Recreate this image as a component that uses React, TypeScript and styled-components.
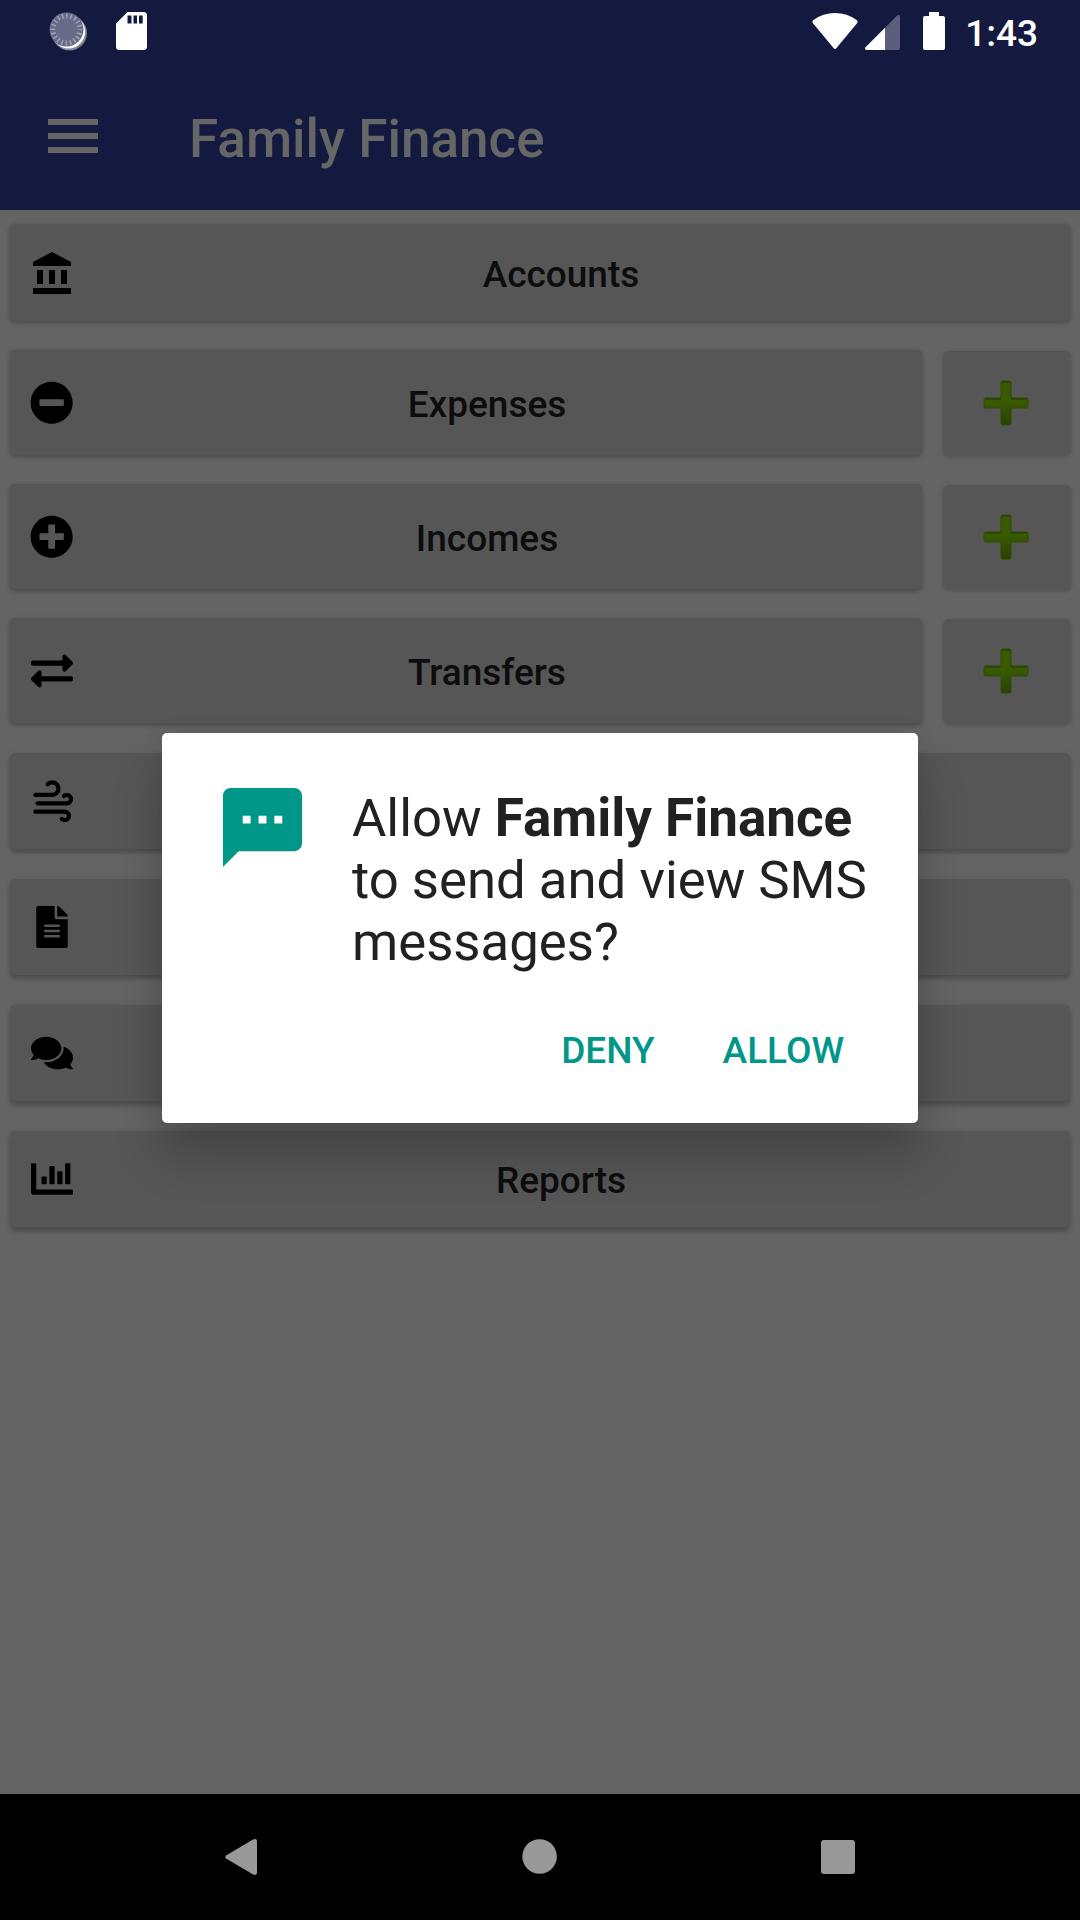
import React from "react";
import styled, { createGlobalStyle } from "styled-components";
import {
  FaMinusCircle,
  FaPlusCircle,
  FaExchangeAlt,
  FaFileAlt,
  FaComments,
  FaChartBar,
} from "react-icons/fa";

const GlobalStyle = createGlobalStyle`
  body {
    margin: 0;
    background: #646464;
    font-family: Roboto, "Noto Sans", sans-serif;
  }
  svg { display: block; flex: none; }
`;

const Screen = styled.div`
  position: relative;
  display: flex;
  flex-direction: column;
  width: 1080px;
  height: 1920px;
  overflow: hidden;
  background: #646464;
`;

const Header = styled.header`
  height: 210px;
  background: #141940;
`;

const StatusBar = styled.div`
  display: flex;
  align-items: center;
  justify-content: space-between;
  box-sizing: border-box;
  height: 63px;
  padding: 0 42px 0 48px;
`;

const StatusGroup = styled.div`
  display: flex;
  align-items: center;
  height: 62px;
  margin-bottom: 1px;
`;

const Clock = styled.span`
  margin-left: 19px;
  font-size: 37px;
  font-weight: 500;
  line-height: 43px;
  color: #fff;
  padding-top: 4px;
`;

const AppBar = styled.div`
  display: flex;
  align-items: center;
  height: 147px;
  padding-left: 48px;
`;

const MenuButton = styled.button`
  display: flex;
  flex-direction: column;
  justify-content: space-between;
  width: 50px;
  height: 34px;
  margin: 0 91px 1px 0;
  padding: 0;
  border: 0;
  background: none;
`;

const MenuLine = styled.span`
  height: 6px;
  background: #666;
`;

const Title = styled.h1`
  margin: 5px 0 0;
  font-size: 53px;
  font-weight: 500;
  line-height: 62px;
  color: #666;
`;

const Menu = styled.main`
  flex: 1;
  display: flex;
  flex-direction: column;
  padding: 14px 9px 0 10px;
`;

const Row = styled.div<{ $gap: number }>`
  display: flex;
  justify-content: space-between;
  margin-bottom: ${(p) => p.$gap}px;
`;

const RowButton = styled.button<{ $height: number; $wide: boolean; $shade: number }>`
  display: flex;
  align-items: center;
  box-sizing: border-box;
  width: ${(p) => (p.$wide ? 1060 : 912)}px;
  height: ${(p) => p.$height}px;
  padding: 0 21px;
  border: 0;
  border-radius: 5px;
  background: #565656;
  box-shadow: 0 ${(p) => p.$shade}px 4px rgba(0, 0, 0, 0.2), 0 0 4px rgba(0, 0, 0, 0.1);
  font-family: inherit;
`;

const IconSlot = styled.span<{ $drop?: number; $shift?: number }>`
  display: flex;
  align-items: center;
  justify-content: center;
  flex: none;
  width: 42px;
  height: 42px;
  box-sizing: border-box;
  margin-top: ${(p) => p.$drop ?? 0}px;
  padding-left: ${(p) => p.$shift ?? 0}px;
  color: #000;
`;

const Label = styled.span`
  flex: 1;
  padding-top: 3px;
  text-align: center;
  font-size: 37px;
  font-weight: 500;
  line-height: 43px;
  color: #0d0d0d;
`;

const AddButton = styled.button`
  display: flex;
  align-items: center;
  justify-content: center;
  width: 128px;
  height: 105px;
  margin-top: 1px;
  padding: 0 2px 2px 0;
  box-sizing: border-box;
  border: 0;
  border-radius: 6px;
  background: #565656;
  box-shadow: 0 1px 4px rgba(0, 0, 0, 0.2);
`;

const Overlay = styled.div`
  position: absolute;
  top: 733px;
  left: 162px;
`;

const Dialog = styled.section`
  display: flex;
  flex-direction: column;
  justify-content: space-between;
  box-sizing: border-box;
  width: 756px;
  height: 390px;
  padding: 47px 42px 51px 53px;
  border-radius: 5px;
  background: #fff;
  box-shadow: 0 32px 48px rgba(0, 0, 0, 0.22), 0 0 24px rgba(0, 0, 0, 0.06);
`;

const DialogBody = styled.div`
  display: flex;
`;

const Message = styled.p`
  margin: 7px 0 0 42px;
  font-size: 52.7px;
  line-height: 62px;
  white-space: nowrap;
  color: #212121;
`;

const AppName = styled.b`
  font-size: 53px;
  line-height: 1;
`;

const DialogActions = styled.div`
  display: flex;
  justify-content: flex-end;
  gap: 68px;
  padding-right: 32px;
`;

const Action = styled.button`
  padding: 0;
  border: 0;
  background: none;
  font-family: inherit;
  font-size: 37px;
  font-weight: 500;
  line-height: 43px;
  color: #009688;
`;

const NavBar = styled.nav`
  display: flex;
  align-items: center;
  justify-content: space-between;
  box-sizing: border-box;
  height: 126px;
  padding: 0 225px;
  background: #000;
`;

const BankIcon = () => (
  <svg width="48" height="48" viewBox="0 0 24 24">
    <path d="M4 10v7h3v-7H4zm6 0v7h3v-7h-3zM2 22h19v-3H2v3zm14-12v7h3v-7h-3zm-4.5-9L2 6v2h19V6l-9.5-5z" />
  </svg>
);

const WindIcon = () => (
  <svg width="50.4" height="50.4" viewBox="0 0 24 24">
    <path d="M4 10a1 1 0 0 1-1-1 1 1 0 0 1 1-1h8a2 2 0 0 0 2-2 2 2 0 0 0-2-2c-.55 0-1.05.22-1.41.59a.973.973 0 0 1-1.42 0c-.39-.39-.39-1.03 0-1.42C9.9 2.45 10.9 2 12 2a4 4 0 0 1 4 4 4 4 0 0 1-4 4H4m15 2a1 1 0 0 0 1-1 1 1 0 0 0-1-1c-.28 0-.53.11-.71.29a.996.996 0 0 1-1.41 0c-.38-.39-.38-1.02 0-1.41C17.42 8.34 18.17 8 19 8a3 3 0 0 1 3 3 3 3 0 0 1-3 3H5a1 1 0 0 1-1-1 1 1 0 0 1 1-1h14m-1 6H4a1 1 0 0 1-1-1 1 1 0 0 1 1-1h14a3 3 0 0 1 3 3 3 3 0 0 1-3 3c-.83 0-1.58-.34-2.12-.88-.38-.39-.38-1.02 0-1.41a.996.996 0 0 1 1.41 0c.18.18.43.29.71.29a1 1 0 0 0 1-1 1 1 0 0 0-1-1z" />
  </svg>
);

const AddIcon = () => (
  <svg width="46" height="46" viewBox="0 0 46 46">
    <defs>
      <linearGradient id="addGreen" x1="0" y1="0" x2="0" y2="1">
        <stop offset="0" stopColor="#375900" />
        <stop offset="0.45" stopColor="#385b00" />
        <stop offset="1" stopColor="#294200" />
      </linearGradient>
    </defs>
    <path
      d="M19.5 1h7q1.5 0 1.5 1.500V18h15.500q1.500 0 1.500 1.500v7q0 1.500-1.500 1.500H28v15.500q0 1.500-1.500 1.500h-7q-1.500 0-1.500-1.500V28H2.500Q1 28 1 26.500v-7Q1 18 2.500 18H18V2.500Q18 1 19.500 1z"
      fill="url(#addGreen)"
      stroke="#304b08"
      strokeWidth="1"
    />
    <path d="M19 2h8M2 19h16M28 19h16" stroke="#263d00" strokeWidth="1.500" opacity="0.7" />
  </svg>
);

const SyncIcon = () => (
  <svg width="40" height="40" viewBox="48 11 40 40">
    <circle cx="69.500" cy="33" r="17.500" fill="#7f8794" />
    <circle cx="68.500" cy="31.700" r="16.700" fill="#fff" />
    <circle cx="66.500" cy="29.500" r="17" fill="#686b88" />
    <circle
      cx="66.500"
      cy="29.500"
      r="13.500"
      fill="none"
      stroke="#a3a5b6"
      strokeWidth="5"
      strokeDasharray="1.400 2.841"
      strokeDashoffset="0.700"
    />
  </svg>
);

const SdCard = styled.svg`
  margin-left: 28px;
`;

const SdCardIcon = () => (
  <SdCard width="31" height="38" viewBox="0 0 31 38">
    <path
      fillRule="evenodd"
      fill="#fff"
      d="M11.500 0H27.500Q31 0 31 3.500V34.500Q31 38 27.500 38H3.500Q0 38 0 34.500V11.500zM11.500 3.500v8h4v-8zM17.500 3.500v8h3.500v-8zM23 3.500v8h3.700v-8z"
    />
  </SdCard>
);

const SignalIcons = () => (
  <svg width="135" height="40" viewBox="811 11 135 40">
    <path
      fill="#fff"
      d="M813 20.200Q811.700 21.600 812.800 23L833.500 48Q835 49.800 836.500 48L857.200 23Q858.300 21.600 857 20.200Q847 13 835 13T813 20.200z"
    />
    <path fill="#5c5f7b" d="M885 27.800L897 15.800Q900 13.800 900 17V48Q900 50 898 50H885z" />
    <path fill="#fff" d="M885 27.800V50H867Q864 50 865.500 47.300z" />
    <path fill="#fff" d="M929 12h10v4h4q2 0 2 2v30q0 2-2 2h-18q-2 0-2-2V18q0-2 2-2h4z" />
  </svg>
);

const SmsIcon = () => (
  <svg width="95" height="95" viewBox="0 0 24 24">
    <path
      fill="#009688"
      d="M20 2H4c-1.100 0-1.990.9-1.990 2L2 22l4-4h14c1.100 0 2-.9 2-2V4c0-1.100-.9-2-2-2zM9 11H7V9h2v2zm4 0h-2V9h2v2zm4 0h-2V9h2v2z"
    />
  </svg>
);

interface MenuEntry {
  icon: React.ReactNode;
  label?: string;
  height: number;
  gap: number;
  shade: number;
  addable?: boolean;
  drop?: number;
  shift?: number;
}

const entries: MenuEntry[] = [
  { icon: <BankIcon />, label: "Accounts", height: 97, gap: 29, shade: 2, drop: 3, shift: 2 },
  { icon: <FaMinusCircle size={43.36} />, label: "Expenses", height: 105, gap: 28, shade: 2, addable: true, drop: 1 },
  { icon: <FaPlusCircle size={43.36} />, label: "Incomes", height: 105, gap: 28, shade: 3, addable: true, drop: 1 },
  { icon: <FaExchangeAlt size={42} />, label: "Transfers", height: 105, gap: 29, shade: 3, addable: true, drop: 1 },
  { icon: <WindIcon />, height: 96, gap: 30, shade: 4 },
  { icon: <FaFileAlt size={42} />, height: 96, gap: 30, shade: 4 },
  { icon: <FaComments size={42} />, height: 96, gap: 30, shade: 5 },
  { icon: <FaChartBar size={42} />, label: "Reports", height: 96, gap: 0, shade: 5 },
];

export default function App() {
  return (
    <>
      <GlobalStyle />
      <Screen>
        <Header>
          <StatusBar>
            <StatusGroup>
              <SyncIcon />
              <SdCardIcon />
            </StatusGroup>
            <StatusGroup>
              <SignalIcons />
              <Clock>1:43</Clock>
            </StatusGroup>
          </StatusBar>
          <AppBar>
            <MenuButton>
              <MenuLine />
              <MenuLine />
              <MenuLine />
            </MenuButton>
            <Title>Family Finance</Title>
          </AppBar>
        </Header>
        <Menu>
          {entries.map((entry, i) => (
            <Row key={i} $gap={entry.gap}>
              <RowButton $height={entry.height} $wide={!entry.addable} $shade={entry.shade}>
                <IconSlot $drop={entry.drop} $shift={entry.shift}>
                  {entry.icon}
                </IconSlot>
                {entry.label && <Label>{entry.label}</Label>}
              </RowButton>
              {entry.addable && (
                <AddButton>
                  <AddIcon />
                </AddButton>
              )}
            </Row>
          ))}
        </Menu>
        <NavBar>
          <svg width="32" height="38" viewBox="0 0 32 38">
            <path fill="#999" d="M1 17.500L28 1.500Q32 0 32 3.500V34.500Q32 38 28 36.500L1 20.500Q-.5 19 1 17.500z" />
          </svg>
          <svg width="36" height="36" viewBox="0 0 36 36">
            <circle cx="18.600" cy="17.500" r="17.300" fill="#999" />
          </svg>
          <svg width="34" height="34" viewBox="0 0 34 34">
            <rect width="34" height="34" rx="3" fill="#999" />
          </svg>
        </NavBar>
        <Overlay>
          <Dialog>
            <DialogBody>
              <SmsIcon />
              <Message>
                Allow <AppName>Family Finance</AppName>
                <br />
                to send and view SMS
                <br />
                messages?
              </Message>
            </DialogBody>
            <DialogActions>
              <Action>DENY</Action>
              <Action>ALLOW</Action>
            </DialogActions>
          </Dialog>
        </Overlay>
      </Screen>
    </>
  );
}
